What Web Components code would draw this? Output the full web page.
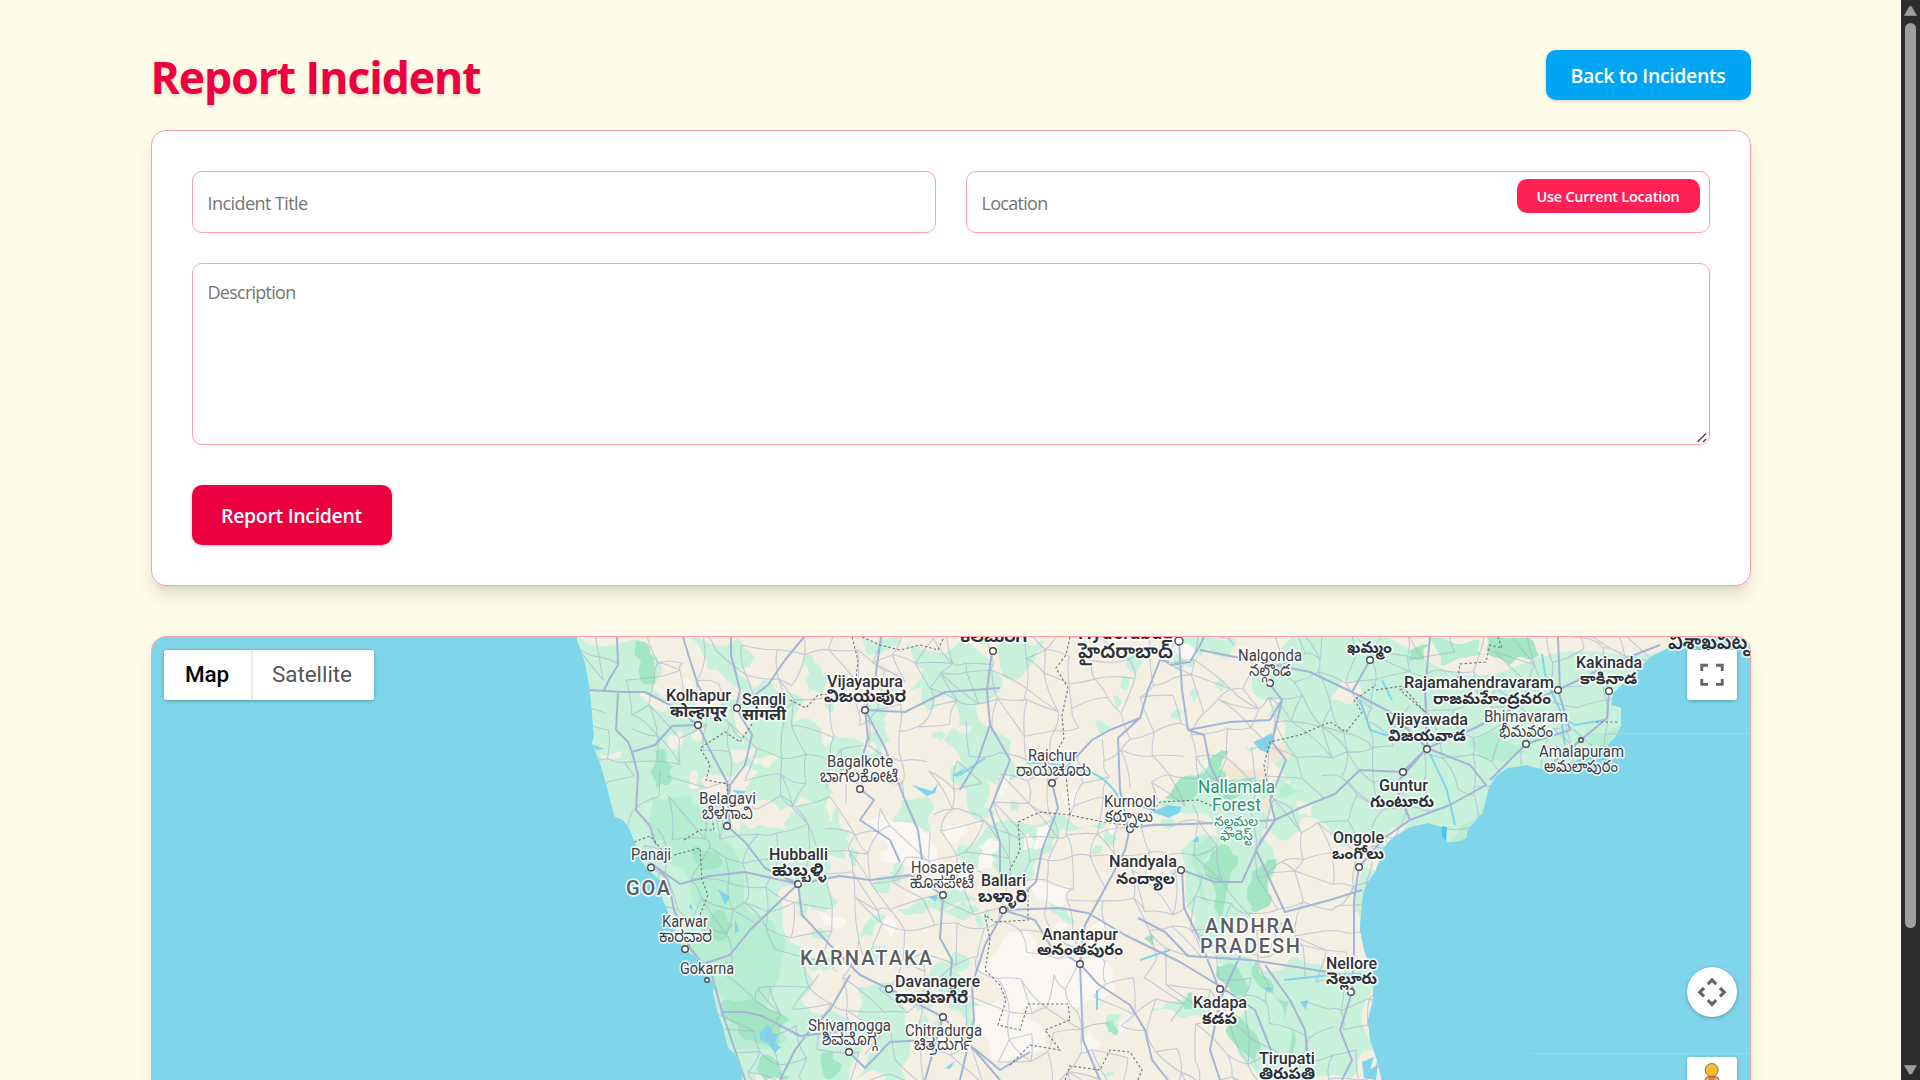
<!DOCTYPE html>
<html lang="en">
<head>
<meta charset="utf-8">
<title>Report Incident</title>
<style>
html,body{margin:0;height:1080px;overflow:hidden;background:#fefbe8;font-family:"Open Sans","Noto Sans",sans-serif}
</style>
</head>
<body>
<report-page></report-page>
<script>
const define=(name,html,setup)=>customElements.define(name,class extends HTMLElement{
  connectedCallback(){
    if(this.shadowRoot)return;
    const t=document.createElement('template');t.innerHTML=html;
    this.attachShadow({mode:'open'}).append(t.content.cloneNode(true));
    if(setup)setup(this,this.shadowRoot);
  }
});

/* Inline text whose letter-spacing is tuned to a given width. */
define('fit-text',`<style>:host{display:inline-block;white-space:nowrap}</style><slot></slot>`,host=>{
  const w=+host.getAttribute('w'),n=host.textContent.length;
  const natural=host.getBoundingClientRect().width;
  host.style.letterSpacing=((w-natural)/n).toFixed(3)+'px';
});

define('action-button',`<style>
:host{display:block}
button{display:flex;box-sizing:border-box;align-items:center;justify-content:center;width:var(--w);height:var(--h);border:0;border-radius:10px;padding:var(--pt,2px) 0 0;
 background:var(--bg);color:#fff;font:600 var(--fs,19.5px)/1.5 "Open Sans",sans-serif;box-shadow:var(--sh,0 1px 4px rgba(0,0,0,.12),0 1px 2.5px rgba(0,0,0,.1))}
</style><button type="button"><slot></slot></button>`);

define('form-field',`<style>
:host{display:flex;box-sizing:border-box;height:62px;border:1px solid #ffa1ad;border-radius:10px;padding:0 9px 0 15px;justify-content:space-between;align-items:flex-start;color:#757575;font-size:18px;background:#fff}
.ph{padding-top:19px;line-height:25px}
:host([area]) .ph{padding-top:16px}
:host([area]){height:182px;padding-right:0}
svg{display:none;align-self:flex-end}
:host([area]) svg{display:block}
.end{padding-top:7px}
</style><span class="ph"><slot></slot></span><span class="end"><slot name="end"></slot></span>
<svg width="14" height="14" viewBox="0 0 14 14" stroke="#444" stroke-width="1.4" fill="none"><path d="M3.500 12L12 3.500M9 12L12 9"/></svg>`);

define('form-card',`<style>
:host{display:flex;flex-direction:column;box-sizing:border-box;height:456px;padding:40px;border:1px solid #ffa1ad;border-radius:15px;background:#fff;box-shadow:0 12.5px 18.75px -3.75px rgba(0,0,0,.12),0 5px 7.5px -5px rgba(0,0,0,.12)}
.row{display:grid;grid-template-columns:1fr 1fr;gap:30px;margin-bottom:30px}
.submit{margin-top:40px}
</style>
<div class="row">
<form-field><fit-text w="100">Incident Title</fit-text></form-field>
<form-field><fit-text w="66">Location</fit-text><action-button slot="end" style="--w:183px;--h:34px;--fs:14.5px;--pt:1px;--bg:#ff2056;--sh:none"><fit-text w="143">Use Current Location</fit-text></action-button></form-field>
</div>
<form-field area><fit-text w="88">Description</fit-text></form-field>
<action-button class="submit" style="--w:200px;--h:60px;--bg:#ec003f"><fit-text w="141">Report Incident</fit-text></action-button>`);

define('page-header',`<style>
:host{display:flex;justify-content:space-between;align-items:flex-start;height:80px}
h1{margin:2px 0 0;font-size:44.5px;line-height:50px;font-weight:700;color:#ec003f;text-shadow:0 2px 3px rgba(0,0,0,.13)}
</style><h1><fit-text w="330">Report Incident</fit-text></h1>
<action-button style="--w:205px;--h:50px;--bg:#00a6f4"><fit-text w="155">Back to Incidents</fit-text></action-button>`);

define('map-type-switch',`<style>
:host{display:flex;width:210px;height:50px;background:#fff;border-radius:2.5px;box-shadow:0 1px 5px -1px rgba(0,0,0,.4);font:400 22.5px/48px Roboto,sans-serif;color:#565656}
span{display:flex;justify-content:center;align-items:flex-start}
.a{width:87px;color:#000;font-weight:500;box-shadow:1px 0 2px rgba(0,0,0,.15)}
.b{flex:1}
</style><span class="a"><fit-text w="44">Map</fit-text></span><span class="b"><fit-text w="80">Satellite</fit-text></span>`);

define('map-tools',`<style>
:host{display:flex;flex-direction:column;width:50px}
div{width:50px;height:50px;background:#fff;border-radius:2.5px;box-shadow:0 1px 5px -1px rgba(0,0,0,.4)}
.cam{border-radius:50%;margin:267px 0 40px}
svg{display:block}
</style>
<div><svg width="50" height="50" fill="none" stroke="#666" stroke-width="2.9"><path d="M14.800 21V15.200H21M29 15.200h6.200V21M35.200 29v5.400H29M21 34.400h-6.200V29"/></svg></div>
<div class="cam"><svg width="50" height="50" fill="none" stroke="#666" stroke-width="3.2"><path d="M20.800 17.200L25 13l4.200 4.200M20.800 33.200L25 37.400l4.200-4.200M17 21l-4.200 4.200 4.200 4.200M33 21l4.200 4.200-4.200 4.200"/></svg></div>
<div><svg width="50" height="50"><path d="M18 23q0-3 4-3.500h6q4 .5 4 3.500v16h-14z" fill="#fbbc2e" stroke="#666" stroke-width=".9"/><path d="M19.500 19.500h10.500l-5.200 6z" fill="#e5802a"/><circle cx="24.700" cy="13" r="6.500" fill="#fbbc2e" stroke="#666" stroke-width=".9"/></svg></div>`);

const land=[[577,630],[577,640],[582,653],[585,663],[590,690],[592,713],[594,737],[592,743],[600,763],[607,787],[612,807],[615,817],[623,820],[630,830],[636,845],[640,858],[647,869],[660,880],[662,897],[670,917],[675,937],[685,950],[697,957],[703,973],[715,983],[713,992],[718,1013],[723,1027],[728,1047],[737,1057],[742,1070],[743,1090],[1384,1090],[1377,1060],[1370,1040],[1368,1020],[1373,1000],[1373,973],[1365,953],[1360,930],[1361,913],[1363,893],[1367,883],[1375,872],[1380,860],[1383,848],[1393,837],[1410,827],[1428,823],[1442,827],[1447,842],[1460,841],[1467,837],[1467,830],[1473,823],[1483,812],[1488,790],[1495,777],[1507,768],[1527,765],[1537,768],[1547,769],[1573,762],[1593,753],[1607,745],[1615,737],[1621,725],[1621,708],[1611,705],[1613,693],[1625,682],[1640,667],[1650,657],[1668,648],[1695,636],[1695,630]];
const green=[
 [[560,630],[640,637],[655,655],[662,670],[652,688],[672,700],[695,702],[716,724],[712,738],[728,752],[722,770],[700,780],[706,795],[722,800],[727,822],[742,842],[770,852],[778,872],[790,868],[812,856],[832,862],[838,900],[822,914],[806,904],[800,880],[784,886],[782,912],[795,945],[812,978],[800,1000],[820,1015],[850,1016],[862,1040],[850,1080],[560,1085]],
 [[690,637],[740,637],[738,660],[752,690],[742,706],[720,672],[706,668]],
 [[745,692],[762,680],[776,692],[806,700],[792,724],[830,730],[880,744],[872,762],[830,772],[832,800],[800,796],[780,812],[756,802],[745,788],[760,772],[742,750],[750,730],[738,716]],
 [[700,705],[740,700],[750,760],[720,775],[700,750]],
 [[900,640],[960,640],[990,660],[1000,690],[975,705],[985,725],[1010,740],[1022,770],[1000,792],[985,775],[985,830],[968,810],[950,780],[962,760],[945,742],[960,716],[930,696],[908,690],[925,668]],
 [[862,637],[900,637],[885,650],[868,655]],
 [[1000,640],[1045,640],[1035,655],[1010,680],[1000,668]],
 [[980,838],[1005,822],[1060,812],[1108,820],[1100,830],[1062,828],[1052,850],[1036,862],[1030,880],[1004,882],[988,860],[960,866],[958,846]],
 [[902,800],[936,806],[930,830],[902,840],[888,826]],
 [[790,815],[840,812],[850,835],[826,850],[800,846],[784,832]],
 [[740,820],[800,838],[850,842],[845,860],[800,856],[770,870],[750,850]],
 [[1178,637],[1235,637],[1228,660],[1206,648],[1190,668],[1178,662]],
 [[1252,690],[1290,637],[1380,630],[1700,630],[1700,850],[1390,850],[1376,856],[1360,838],[1340,846],[1330,828],[1300,820],[1290,838],[1268,830],[1278,800],[1290,780],[1272,762],[1284,742],[1268,716],[1282,700]],
 [[1160,800],[1190,782],[1212,764],[1240,770],[1268,786],[1290,778],[1275,805],[1262,840],[1258,900],[1245,925],[1230,925],[1210,948],[1196,920],[1184,900],[1180,850],[1195,838],[1220,836],[1215,826],[1160,808]],
 [[1210,950],[1240,955],[1262,972],[1300,960],[1340,972],[1378,966],[1376,1050],[1352,1080],[1310,1082],[1262,1082],[1235,1050],[1228,1020],[1260,1000],[1240,980]],
 [[1362,870],[1378,870],[1366,890],[1360,930],[1352,910]],
 [[1150,1010],[1180,1000],[1215,985],[1212,1012],[1180,1020]],
 [[930,970],[950,966],[965,985],[980,1004],[968,1018],[950,1010]],
 [[860,986],[890,982],[904,1010],[910,1050],[890,1080],[852,1080],[870,1040],[856,1014]],
 [[895,908],[930,900],[962,892],[978,900],[940,912],[912,914]],
 [[876,914],[888,918],[872,938],[860,938]],
 [[1044,895],[1064,905],[1076,922],[1052,914]],
 [[1106,830],[1118,838],[1108,846]],[[1113,695],[1122,700],[1116,710]],[[1096,720],[1112,726],[1104,736]],
 [[1214,684],[1226,682],[1220,692]],[[1105,1016],[1122,1014],[1118,1030],[1106,1028]]];
const dark=[
 [[636,640],[650,646],[655,668],[655,684],[640,678],[634,655]],[[650,748],[662,748],[666,762],[678,766],[670,784],[658,788],[650,772],[656,762]],
 [[690,850],[715,850],[722,866],[700,868]],[[704,918],[722,910],[735,925],[728,938],[708,932]],[[722,1000],[760,1002],[790,1020],[780,1044],[744,1040],[726,1020]],
 [[760,1056],[780,1062],[790,1078],[765,1082]],[[820,1058],[834,1050],[842,1066],[830,1080]],[[1164,798],[1200,776],[1216,754],[1228,750],[1222,768],[1260,776],[1244,794],[1198,792]],
 [[1212,850],[1228,845],[1238,856],[1230,880],[1222,920],[1214,905]],[[1262,866],[1275,858],[1268,880],[1272,896],[1252,912],[1246,890]],
 [[1216,965],[1240,972],[1250,990],[1236,996],[1220,980]],[[1256,960],[1272,980],[1290,1000],[1296,1040],[1290,1060],[1284,1020],[1262,990]],
 [[1230,1010],[1244,1020],[1262,1050],[1258,1070],[1240,1050]],[[1486,637],[1530,637],[1540,655],[1510,665],[1490,655]],[[1410,650],[1430,645],[1425,660],[1408,662]],
 [[1105,1022],[1114,1020],[1118,1034],[1108,1032]],[[1184,1000],[1192,992],[1195,1010],[1186,1010]],[[1144,938],[1154,936],[1152,946]]];
const mid=[
 [[640,790],[690,794],[712,830],[735,850],[748,910],[776,930],[782,960],[768,1005],[790,1040],[745,1050],[728,1030],[718,990],[690,945],[705,915],[690,880],[668,860],[650,835]],
 [[1465,742],[1500,730],[1530,752],[1500,762],[1480,756]],[[1586,734],[1620,724],[1612,745],[1590,753]],[[1460,825],[1490,800],[1480,825],[1465,840],[1448,842]],
 [[1205,838],[1216,846],[1212,905],[1200,900]],[[1430,637],[1480,637],[1484,655],[1440,668]],[[1304,790],[1290,784],[1276,800]]];
const beige=[[[640,690],[672,700],[665,712],[645,700]],[[668,738],[680,730],[682,744],[672,750]],[[600,752],[622,750],[618,758],[604,760]],[[690,730],[706,728],[702,742],[692,738]],
 [[730,750],[755,748],[750,758],[732,760]],[[750,757],[778,755],[770,768],[755,764]],[[1330,700],[1342,680],[1362,690],[1350,706]],[[1450,665],[1462,662],[1458,676]],[[1480,660],[1505,668],[1490,674]],
 [[1366,858],[1378,852],[1372,872]],[[1386,838],[1408,824],[1402,834],[1384,846]],[[1296,800],[1320,796],[1312,815],[1298,815]]];
const sand=[[[1218,768],[1236,761],[1262,768],[1264,779],[1240,780],[1226,774]],[[1272,744],[1284,742],[1290,756],[1276,764],[1268,756]],[[1262,800],[1276,796],[1268,816],[1262,812]]];
const pale=[[[870,820],[900,822],[934,846],[940,870],[910,868],[890,850]],[[1010,930],[1060,962],[1100,958],[1118,990],[1080,1008],[1040,1004],[1010,1010],[975,970]],[[820,910],[846,920],[842,928],[826,926]],[[1060,790],[1080,786],[1070,808],[1064,800]],[[1030,882],[1070,886],[1064,906],[1040,900]],
 [[1000,1000],[1024,1016],[1044,1050],[1020,1064],[990,1060]],[[680,678],[692,682],[688,690]],[[1036,828],[1050,822],[1046,846],[1034,850]],[[1176,645],[1196,650],[1188,662]],[[1114,1020],[1126,1022],[1120,1034]],[[998,776],[1010,772],[1006,790]]];
const roads=['M683 637L690 660 698 685 710 705M731 637V655L740 690 736 708 752 735 745 765 730 785 727 826','M590 690L622 692 645 692 670 705 698 725 710 750 727 782 730 826','M617 637L618 665 610 678 604 690M618 692L616 730 628 742 632 752 638 775 636 810 650 826 656 845','M804 637L785 660 768 685 742 705','M698 725L672 726 655 745 632 752','M881 637L875 680 865 710 868 738 860 765','M865 710L905 712 945 692 1000 688','M865 710L885 748 905 800 918 830 922 860','M727 826L745 842 765 868 798 884 750 930 730 955 700 965','M798 884L802 915 830 945 860 975 889 989 943 1017','M798 884L840 876 870 880 910 875 943 895 940 938 952 960 948 1000','M860 789L874 800 860 820 890 840 900 862','M655 866L680 884 710 876 745 872 798 884','M655 866L668 880 674 910 690 948 712 975 722 1012 735 1050 745 1080','M722 1012L745 1012 762 1016 800 1036 850 1030','M850 975L830 1010 810 1030 795 1050 780 1080','M849 1052L865 1068 890 1042 925 1040','M1169 662L1160 660 1148 690 1140 718 1118 738 1120 790 1128 828','M1140 718L1110 730 1092 740 1052 783','M1179 641L1182 690 1188 730 1204 735 1210 765 1222 790','M1170 665L1190 662 1200 645 1204 637M1200 650L1250 660 1310 672 1352 692 1390 712 1427 748','M1188 730L1230 722 1270 720 1282 700 1269 683M1282 700L1272 742 1286 760 1270 800 1275 820 1256 850','M1130 828L1125 850 1115 870 1085 925 1080 964 1083 1040 1100 1080','M1130 828L1155 825 1190 824 1275 820 1300 808 1335 794 1360 770 1403 772 1427 748','M1182 870L1184 908 1200 940 1219 989','M1005 910L985 945 972 985 974 1020 960 1080','M1005 910L1060 908 1088 913 1125 935 1180 962 1218 985 1255 1010 1275 1060','M1080 964L1098 984 1130 1005 1145 1030 1152 1060 1168 1080','M1182 870L1215 882 1242 882 1260 842 1275 820','M1138 918L1165 932 1188 956 1250 960 1290 966 1340 974','M1359 867L1354 900 1354 950 1352 992 1340 1030 1352 1060 1342 1080','M1359 867L1384 838 1410 820 1395 785 1427 748 1470 765 1486 785 1450 805 1410 820','M1427 748L1475 728 1510 710 1558 690 1609 665 1660 645','M1558 690L1570 730 1526 744 1490 780','M1609 691L1607 718 1581 740 1550 765','M992 651L987 690 990 725 978 760 960 790','M990 725L1010 760 990 810 1000 842 1000 880','M1052 783L1058 808 1042 850 1036 882 1005 910','M1256 850L1285 912 1330 900 1362 890','M1240 956L1220 1000 1210 1050 1220 1080','M1265 965L1290 1000 1305 1030 1310 1080','M1003 910L1035 920 1050 945 1080 964','M1030 1052L1000 1070 970 1045 943 1017M970 1045L1000 1080','M943 1017L925 1080','M1370 660L1352 692M1427 748L1425 690 1430 637M1558 637L1560 690'];
const dashed=['M852 637L858 660 856 680M862 637L880 645 900 650 920 645 938 650 944 637','M790 700L806 708 818 695 830 694','M752 724L740 742 725 732 700 748 710 765 706 780 728 784 727 800','M634 842L650 836 662 850 672 858M674 855L700 848 702 880 708 895 700 915 703 930M684 840L700 830 714 830 712 818','M1070 637L1066 655 1056 668 1068 688 1062 715 1064 738 1055 755','M1066 775L1070 815 1108 823 1140 826 1160 802 1198 800 1212 806','M1070 815L1040 812 1018 822 1020 850 1010 870','M1268 790L1264 765 1270 742 1300 735 1330 722 1346 732 1362 712 1354 700 1376 685','M1376 690L1402 686 1425 712 1400 690 1420 680','M1458 678L1460 664 1486 662 1490 645 1502 648 1498 637','M1596 722L1618 722','M1028 890L1028 920 995 922 985 915 990 940 985 970 1000 985 1006 1000 998 1025 1020 1030 1028 1004 1068 1004 1070 1020 1045 1030 1060 1050 1030 1045 1010 1065','M1065 1080L1070 1066 1100 1070 1110 1050 1130 1052 1142 1070 1138 1080'];
const waterBits=['M1253 742l10-4 8-5 4 6-5 8-2 6-8-3z','M1152 812l16-7 14 2-3 6-10 5z','M760 1032l8-8 4 8 6 3-3 8 6 4-6 6-8-10-7-3z','M912 785l20 6 6-8-3 10-8 3zM952 775l14-7-8 9zM718 889l12 8-5 8zM691 903l2 8-4-4zM732 790l14 1-5 6zM1192 842l6-6 1 6zM928 897l10-3-2 8zM1262 987l12 0-4 6zM1300 1002l8-2-2 10zM735 920l4 10-4 4zM590 743l14 6-8 1zM945 1068l10-7-5 8z','M1362 1062l12-5-4 12 8-4-2 15-12-2z'];
const rivers=['M1027 763Q1070 764 1090 772T1120 800L1160 812','M1542 654L1546 680 1560 710 1565 745','M1560 716L1575 725 1605 720','M1430 754L1447 790 1455 825','M1360 700L1370 730 1395 738','M960 775L985 758','M1284 980L1330 975 1365 974','M1097 990V1010','M1140 960L1170 950','M1392 700L1382 680'];
/* name, left, right, baseline, style */
const labels=[['Kolhapur',666,731,701,5],['कोल्हापूर',670,727,717,6],['Sangli',742,786,705,5],['सांगली',742,786,720,6],['Vijayapura',827,903,687,5],['ವಿಜಯಪುರ',824,906,702,6],['Bagalkote',827,893,767,4],['ಬಾಗಲಕೋಟೆ',820,898,782,4],['Belagavi',699,756,804,4],['ಬೆಳಗಾವಿ',702,753,819,4],['Panaji',631,671,860,4],['GOA',626,670,895,9],['Hubballi',769,828,860,5],['ಹುಬ್ಬಳ್ಳಿ',772,826,876,6],['Hosapete',911,974,873,4],['ಹೊಸಪೇಟೆ',910,974,888,4],['Karwar',662,708,927,4],['ಕಾರವಾರ',659,712,942,4],['Gokarna',680,734,974,4],['KARNATAKA',800,932,965,9],['Davanagere',895,980,987,5],['ದಾವಣಗೆರೆ',895,968,1003,6],['Shivamogga',808,891,1031,4],['ಶಿವಮೊಗ್ಗ',822,877,1045,4],['Chitradurga',905,982,1036,4],['ಚಿತ್ರದುರ್ಗ',914,972,1050,4],['ಕಲಬುರಗಿ',960,1027,642,6],['Hyderabad',1078,1173,639,7],['హైదరాబాద్',1078,1173,658,7],['Nalgonda',1238,1302,661,4],['నల్గొండ',1249,1291,676,4],['ఖమ్మం',1347,1392,653,6],['Raichur',1028,1077,761,4],['ರಾಯಚೂರು',1016,1091,776,4],['Kurnool',1104,1156,807,4],['కర్నూలు',1105,1153,822,4],['Nallamala',1198,1275,793,8],['Forest',1212,1261,811,8],['నల్లమల',1214,1258,826,3],['ఫారెస్ట్',1220,1253,840,3],['Nandyala',1109,1177,867,5],['నంద్యాల',1116,1175,884,6],['Ongole',1333,1384,843,5],['ఒంగోలు',1332,1384,859,6],['Ballari',981,1026,886,5],['ಬಳ್ಳಾರಿ',978,1027,902,6],['Anantapur',1042,1118,940,5],['అనంతపురం',1037,1123,955,6],['ANDHRA',1205,1294,933,9],['PRADESH',1200,1300,953,9],['Nellore',1326,1377,969,5],['నెల్లూరు',1326,1377,984,6],['Kadapa',1193,1247,1008,5],['కడప',1202,1237,1024,6],['Tirupati',1259,1315,1064,5],['తిరుపతి',1259,1315,1079,6],['Kakinada',1576,1642,668,5],['కాకినాడ',1580,1637,684,6],['Rajamahendravaram',1404,1554,688,5],['రాజమహేంద్రవరం',1433,1551,704,6],['Vijayawada',1386,1468,725,5],['విజయవాడ',1388,1466,741,6],['Bhimavaram',1484,1568,722,4],['భీమవరం',1499,1553,737,4],['Amalapuram',1539,1624,757,4],['అమలాపురం',1544,1618,772,4],['Guntur',1379,1428,791,5],['గుంటూరు',1370,1434,807,6],['విశాఖపట్నం',1668,1764,649,7]];
const dots=[[698,725],[737,708],[865,710],[860,789],[727,826],[651,867.5],[798,884],[943,895],[685,949],[707,980,2.2],[889,989],[849,1052],[943,1017],[993,651],[1179,641,4],[1270,683],[1370,660],[1052,783],[1130,829],[1181,870],[1359,867],[1003,910],[1080,964],[1351,992],[1220,989],[1609,691],[1558,690],[1427,749],[1526,744],[1581,740,2.2],[1403,772]];

define('incident-map',`<style>
:host{display:grid;box-sizing:border-box;height:500px;border:1px solid #ffa1ad;border-radius:15px;overflow:hidden;background:#7fd6ea;box-shadow:0 12.5px 18.75px -3.75px rgba(0,0,0,.1),0 5px 7.5px -5px rgba(0,0,0,.1)}
svg,.controls{grid-area:1/1}
svg{display:block;width:1598px;height:443px}
.controls{display:flex;justify-content:space-between;align-items:flex-start;padding:13px 13px 0 12px;z-index:1}
text{fill:#2d3035;font-family:Roboto,"Noto Sans Kannada","Noto Sans Telugu","Noto Sans Devanagari","Noto Sans",sans-serif;stroke:#fff;stroke-opacity:.85;stroke-width:3.4px;stroke-linejoin:round;paint-order:stroke}
.k3{font-size:14px;fill:#2a9371}.k4{font-size:16.8px;fill:#3c4045}.k5{font-size:17.2px;font-weight:500}.k6{font-size:16.2px;font-weight:700}.k7{font-size:21px;font-weight:600}.k8{font-size:18.500px;fill:#2a9371}.k9{font-size:20px;font-weight:500;fill:#5a5e64}
</style>
<svg viewBox="152 637 1598 443" preserveAspectRatio="xMinYMin slice"></svg>
<div class="controls"><map-type-switch></map-type-switch><map-tools></map-tools></div>`,(host,root)=>{
  let seed=7;const rnd=()=>(seed=(seed*16807)%2147483647)/2147483647;
  const rough=(pts,amp,depth=2)=>{
    for(let d=0;d<depth;d++){const out=[];
      pts.forEach((p,i)=>{const q=pts[(i+1)%pts.length],l=Math.hypot(q[0]-p[0],q[1]-p[1])*amp;
        out.push(p,[(p[0]+q[0])/2+(rnd()-.5)*l,(p[1]+q[1])/2+(rnd()-.5)*l]);});pts=out;}
    /* round the corners by running quadratics through edge midpoints */
    const n=pts.length,m=i=>{const a=pts[i%n],b=pts[(i+1)%n];return((a[0]+b[0])/2).toFixed(1)+' '+((a[1]+b[1])/2).toFixed(1);};
    let d='M'+m(0);for(let i=1;i<=n;i++){const p=pts[i%n];d+='Q'+p[0].toFixed(1)+' '+p[1].toFixed(1)+' '+m(i);}
    return d+'Z';};
  const layer=(list,fill,amp=.55)=>list.length?`<g fill="${fill}">${list.map(p=>`<path d="${rough(p,amp)}"/>`).join('')}</g>`:'';
  const patches=(n,x0,x1,y0,y1,r0,r1)=>Array.from({length:n},()=>{const x=x0+rnd()*(x1-x0),y=y0+rnd()*(y1-y0),r=r0+rnd()*r1,k=.6+rnd()*.8;
    return Array.from({length:8},(_,i)=>{const a=i*Math.PI/4,s=r*(.55+rnd()*.8);return[x+Math.cos(a)*s*k,y+Math.sin(a)*s/k];});});
  /* minor road mesh on a jittered lattice */
  const S=25,cols=45,rows=20,P=[];
  for(let j=0;j<rows;j++){P.push([]);for(let i=0;i<cols;i++)P[j].push([575+i*S+(rnd()-.5)*20,630+j*S+(rnd()-.5)*20]);}
  let mesh='';const link=(a,b)=>{const mx=(a[0]+b[0])/2+(rnd()-.5)*10,my=(a[1]+b[1])/2+(rnd()-.5)*10;mesh+=`M${a[0].toFixed(1)} ${a[1].toFixed(1)}Q${mx.toFixed(1)} ${my.toFixed(1)} ${b[0].toFixed(1)} ${b[1].toFixed(1)}`;};
  for(let j=0;j<rows;j++)for(let i=0;i<cols;i++){
    if(i+1<cols&&rnd()<.64)link(P[j][i],P[j][i+1]);
    if(j+1<rows&&rnd()<.64)link(P[j][i],P[j+1][i]);
    if(i+1<cols&&j+1<rows&&rnd()<.22)link(P[j][i],P[j+1][i+1]);}
  const landPath='M'+land.map(p=>p.join(' ')).join('L')+'Z';
  root.querySelector('svg').innerHTML=`<clipPath id="land"><path d="${landPath}"/></clipPath>
  <path d="M1531 1053.500H1750M1600 733.500H1750" stroke="#93dcee" fill="none"/>
  <g clip-path="url(#land)"><path d="${landPath}" fill="#f4efe3"/>
  ${layer(green,'#c8f1dc')}${layer(patches(46,720,1010,640,1080,5,10),'#c8f1dc')}${layer(patches(20,1010,1350,640,1080,3,8),'#c8f1dc')}
  ${layer(mid,'#b7edd2')}${layer(dark,'#a3e6c3')}${layer(beige,'#f4efe3')}${layer(sand,'#f2e6d5')}${layer(patches(14,690,1000,640,820,3,6),'#f4efe3')}${layer(pale,'#faf7f3')}${layer(patches(14,860,1130,790,1060,4,8),'#faf7f3')}
  <path d="${rivers.join('')}" fill="none" stroke="#7fd6ea" stroke-width="2"/><path d="${waterBits.join('')}" fill="#7fd6ea"/>
  <path d="${mesh}" fill="none" stroke="#a3b0cf" stroke-opacity=".6" stroke-width="1.1"/>
  <path d="${roads.join('')}" fill="none" stroke="#a5b4d4" stroke-width="2" stroke-linejoin="round"/>
  <path d="${dashed.join('')}" fill="none" stroke="#6e7377" stroke-width="1.1" stroke-dasharray="2.500 2.200"/></g>
  <path d="M1442 826l5 1-1 14-4-5z" fill="#4cc4e6"/>
  ${dots.map(d=>`<circle cx="${d[0]}" cy="${d[1]}" r="${d[2]||3.3}" fill="#fff" stroke="#44484c" stroke-width="1.4"/>`).join('')}
  ${labels.map(l=>`<text class="k${l[4]}" x="${l[1]}" y="${l[3]}" textLength="${l[2]-l[1]}" lengthAdjust="${l[4]===9?'spacing':'spacingAndGlyphs'}">${l[0]}</text>`).join('')}`;
});

define('scroll-rail',`<style>
:host{display:flex;flex-direction:column;align-items:center;width:19px;height:1080px;background:#2c2c2c}
i{flex:none;width:11px;height:905px;border-radius:5.5px;background:#9f9f9f;margin:7px 0 0 0}
svg{display:block;flex:none}
.dn{margin-top:auto;margin-bottom:4px}
</style><svg width="19" height="16"><path d="M3.500 15.500L8.500 6.500h2l5 9z" fill="#9f9f9f" stroke="#9f9f9f" stroke-width=".6" stroke-linejoin="round"/></svg><i></i><svg class="dn" width="19" height="12"><path d="M3.500 1.500h12l-5 8.500h-2z" fill="#9f9f9f" stroke="#9f9f9f" stroke-width=".6" stroke-linejoin="round"/></svg>`);

define('report-page',`<style>
:host{display:flex;width:1920px;height:1080px;overflow:hidden}
main{display:flex;flex-direction:column;width:1600px;margin:0 auto;padding-top:50px;height:1030px}
.view{display:flex;width:1901px;height:1080px;overflow:hidden}
form-card{flex:none;margin-bottom:50px}
page-header,incident-map{flex:none}
</style><div class="view"><main><page-header></page-header><form-card></form-card><incident-map></incident-map></main></div><scroll-rail></scroll-rail>`);
</script>
</body>
</html>
